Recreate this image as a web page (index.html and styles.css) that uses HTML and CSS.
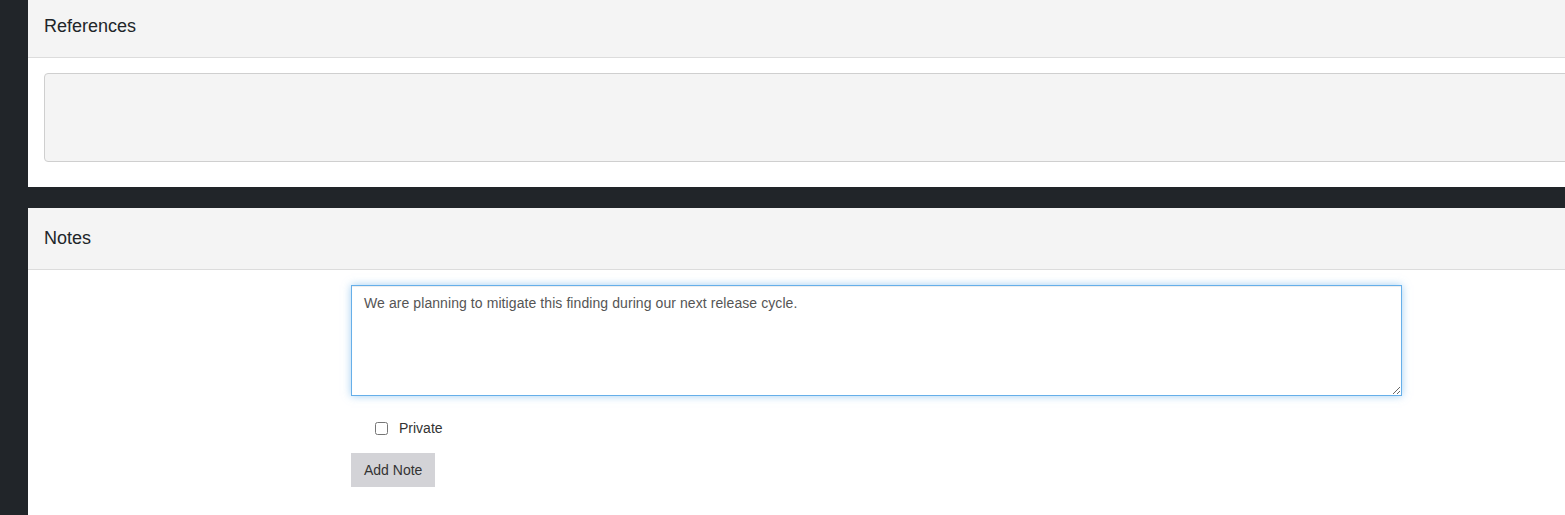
FILE: index.html
```html
<!DOCTYPE html>
<html>
<head>
<meta charset="utf-8">
<link rel="stylesheet" href="styles.css">
</head>
<body>
<div class="page">
  <section class="card card-refs">
    <div class="card-header">References</div>
    <div class="card-body refs-body">
      <div class="refs-box"></div>
    </div>
  </section>
  <section class="card card-notes">
    <div class="card-header">Notes</div>
    <div class="card-body notes-body">
      <textarea class="note-input">We are planning to mitigate this finding during our next release cycle.</textarea>
      <label class="private-row"><input type="checkbox" class="private-check"><span>Private</span></label>
      <button class="add-btn" type="button">Add Note</button>
    </div>
  </section>
</div>
</body>
</html>
```
FILE: styles.css
```css
html, body {
  margin: 0;
  padding: 0;
}
body {
  background: #212529;
  overflow: hidden;
  font-family: "Liberation Sans", Arial, sans-serif;
  color: #333;
  width: 1565px;
  height: 515px;
}
.page {
  margin-top: -4px;
  padding-left: 28px;
  display: flex;
  flex-direction: column;
  gap: 21px;
}
.card {
  background: #fff;
  width: 1640px;
}
.card-header {
  background: #f4f4f4;
  height: 61px;
  border-bottom: 1px solid #dcdcdc;
  box-sizing: content-box;
  padding-left: 16px;
  display: flex;
  align-items: center;
  font-size: 18px;
  color: #212529;
}
.refs-body {
  padding: 15px 16px 25px;
}
.refs-box {
  height: 87px;
  background: #f4f4f4;
  border: 1px solid #cfcfcf;
  border-radius: 4px;
}
.notes-body {
  padding: 15px 0 40px 323px;
  display: flex;
  flex-direction: column;
  align-items: flex-start;
}
.note-input {
  box-sizing: border-box;
  width: 1051px;
  height: 111px;
  margin: 0;
  padding: 7px 12px;
  border: 1px solid #66afe9;
  outline: none;
  box-shadow: inset 0 1px 1px rgba(0,0,0,.075), 0 0 8px rgba(102,175,233,.6);
  font-family: "Liberation Sans", Arial, sans-serif;
  font-size: 14px;
  line-height: 20px;
  color: #555;
  letter-spacing: 0.08px;
  resize: both;
}
.private-row {
  margin-top: 22px;
  margin-left: 20px;
  display: flex;
  align-items: center;
  font-size: 14px;
  line-height: 20px;
  color: #333;
}
.private-check {
  margin: 0 11px 0 4px;
  width: 13px;
  height: 13px;
}
.add-btn {
  margin-top: 15px;
  height: 34px;
  padding: 0 13px;
  border: none;
  background: #d3d3d7;
  color: #333;
  font-family: "Liberation Sans", Arial, sans-serif;
  font-size: 14px;
}
```
